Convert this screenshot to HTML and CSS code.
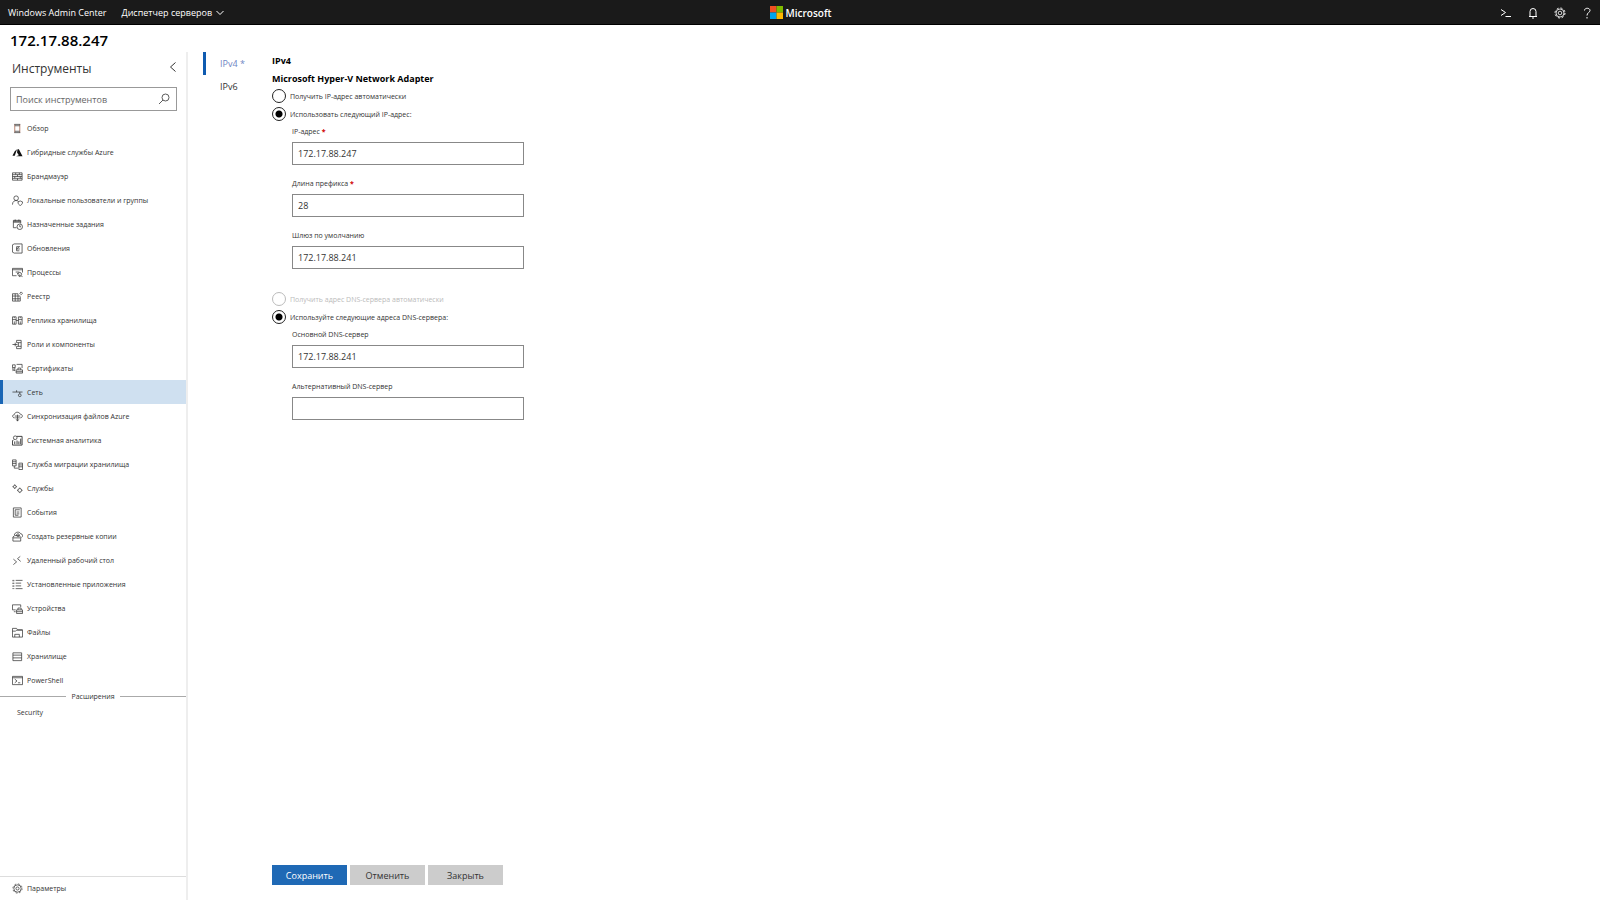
FILE: index.html
```html
<!DOCTYPE html>
<html lang="ru">
<head>
    <meta charset="UTF-8">
    <meta name="viewport" content="width=device-width, initial-scale=1.0">
    <title>Windows Admin Center</title>
    <link rel="stylesheet" href="styles.css">
</head>
<body>
    <header class="topbar">
        <nav class="topbar-left">
            <a href="#">Windows Admin Center</a>
            <button type="button" class="solution">Диспетчер серверов
                <svg width="8" height="6" viewBox="0 0 8 6"><path d="M.5 1 4 4.5 7.5 1"/></svg>
            </button>
        </nav>
        <div class="brand">
            <svg width="13" height="13" viewBox="0 0 13 13">
                <rect width="6.500" height="6.500" fill="#f25022"/>
                <rect x="6.500" width="6.500" height="6.500" fill="#7fba00"/>
                <rect y="6.500" width="6.500" height="6.500" fill="#00a4ef"/>
                <rect x="6.500" y="6.500" width="6.500" height="6.500" fill="#ffb900"/>
            </svg>
            <span>Microsoft</span>
        </div>
        <div class="topbar-right">
            <button type="button" aria-label="PowerShell"><svg width="12" height="12" viewBox="0 0 12 12"><path d="M1 2.500 5.500 5.500 1 8.500M5.500 9.500H11"/></svg></button>
            <button type="button" aria-label="Уведомления"><svg width="12" height="12" viewBox="0 0 12 12"><path d="M3 9V4.500a3 3 0 0 1 6 0V9M2 9.500h8M5 11h2"/></svg></button>
            <button type="button" aria-label="Параметры"><svg width="12" height="12" viewBox="0 0 12 12"><circle cx="6" cy="6" r="5" stroke-dasharray="2 1.900"/><circle cx="6" cy="6" r="4" stroke-width=".8"/><circle cx="6" cy="6" r="1.800" stroke-width=".8"/></svg></button>
            <button type="button" aria-label="Справка"><svg width="12" height="12" viewBox="0 0 12 12"><path d="M3.500 3.500C3.500.500 9 .500 9 3.500 9 5.500 6 5.500 6 8.500M6 10v1.500"/></svg></button>
        </div>
    </header>

    <h1 class="server-name">172.17.88.247</h1>

    <div class="workspace">
        <aside class="sidebar">
            <div class="sidebar-head">
                <h2>Инструменты</h2>
                <button type="button" aria-label="Свернуть"><svg width="8" height="12" viewBox="0 0 8 12"><path d="M6.500 1.500 1.500 6l5 4.500"/></svg></button>
            </div>
            <div class="search">
                <input type="text" placeholder="Поиск инструментов" aria-label="Поиск инструментов">
                <button type="button" aria-label="Найти"><svg width="12" height="12" viewBox="0 0 12 12"><circle cx="7.500" cy="4.500" r="3.500"/><path d="M5 7 1 11"/></svg></button>
            </div>

            <nav class="tools">
                <a href="#"><svg viewBox="0 0 12 12"><path d="M3 1.500v9M8.500 1.500v9" stroke="#a05a40"/><path d="M2.500 1.500H9M2.500 10.500H9M3 3h5.500M3 9h5.500"/></svg>Обзор</a>
                <a href="#"><svg viewBox="0 0 12 12"><path class="solid" d="M5.500 2.500 3 4.500.500 9.500H3zM6 2.500h1.500L11.500 10H4.500l3-1L5.500 6z"/></svg>Гибридные службы Azure</a>
                <a href="#"><svg viewBox="0 0 12 12"><path d="M.500 2h10.500v8H.500zM.500 4h10.500M.500 6h10.500M.500 8h10.500M4 2v2M8 2v2M6 4v2M3 6v2M9 6v2M6 8v2"/></svg>Брандмауэр</a>
                <a href="#"><svg viewBox="0 0 12 12"><circle cx="4.500" cy="3.500" r="2.500"/><path d="M.500 10.500C.500 7 3 6 4.500 6c1 0 2 .500 2.500 1M6.500 7.500 9 6.500l2.500 1C11.500 10 10 11 9 11.500 8 11 6.500 10 6.500 7.500z"/></svg>Локальные пользователи и группы</a>
                <a href="#"><svg viewBox="0 0 12 12"><path d="M5 9.500H1.500v-8h8V5M1.500 2.500h8M1.500 3.500h8M3.500.500v2M7.500.500v2"/><circle cx="8.500" cy="8.500" r="3"/><path d="M8.500 6.500v2H10"/></svg>Назначенные задания</a>
                <a href="#"><svg viewBox="0 0 12 12"><path d="M2.500 1h8.500v10H2.500M2.500 1 .500 2v8l2 1M8.500 4H5M8 4 5 6.500h3.500M5 8.500h3M5 4v4.500"/></svg>Обновления</a>
                <a href="#"><svg viewBox="0 0 12 12"><path d="M5 9.500H.500v-8h11V6M.500 3h11M4 5.500h4M5.500 7.500 7 6.500"/><circle cx="8.500" cy="8" r="2"/><path d="m10 9.500 1.500 1.500M8.500 8v3"/></svg>Процессы</a>
                <a href="#"><svg viewBox="0 0 12 12"><path d="M.500 3h6M.500 3v8h8.500V6M.500 5.500H9M.500 8.500H9M3.500 3v8M6.500 3v8M8.500 2.500 10 1l1.500 1.500L10 4z"/></svg>Реестр</a>
                <a href="#"><svg viewBox="0 0 12 12"><path d="M.500 2h4v8h-4zM7 2h4v8H7zM.500 5h4M7 5h4M2.500 7v3M9 7v3M2.500 2v1.500M9 2v1.500M4.500 6H7"/></svg>Реплика хранилища</a>
                <a href="#"><svg viewBox="0 0 12 12"><path d="M5 4V1.500h5v9H5V8M.500 6H6M3.500 4v4M5 4h5M5 8h5M7 4v4"/></svg>Роли и компоненты</a>
                <a href="#"><svg viewBox="0 0 12 12"><path d="M5 1.500h6v4M.500 2h3v3h-3zM1 5v3.500l1-1 1 1V5M4.500 7.500h7V11h-7zM6.500 7.500v-2h3v2M4.500 9.500h7"/></svg>Сертификаты</a>
                <a href="#" class="active"><svg viewBox="0 0 12 12"><path d="M.500 5.500h11M5 3.500v2M8.500 5.500v2"/><circle cx="8.500" cy="9" r="1.500"/></svg>Сеть</a>
                <a href="#"><svg viewBox="0 0 12 12"><path d="M3 7.500C0 7.500 0 4 2.500 4 3 .500 8 .500 9 3.500c3 0 3 4 0 4M3 5.500h6M3.500 7.500h5M6 4v7M4.500 9 6 11 7.500 9"/></svg>Синхронизация файлов Azure</a>
                <a href="#"><svg viewBox="0 0 12 12"><path d="M5 1.500h6v9.500H.500V6M3 10V7M5.500 10V6M7.500 10V7M9.500 10V4" stroke-width="1"/><circle cx="3.500" cy="3" r="2"/><path d="M2 5 .500 6.500"/></svg>Системная аналитика</a>
                <a href="#"><svg viewBox="0 0 12 12"><path d="M.500 1h4v6.500h-4zM.500 3h4M.500 5h4M7.500 4.500h4v7h-4zM7.500 6.500h4M7.500 8.500h4M2.500 7.500V10h4"/></svg>Служба миграции хранилища</a>
                <a href="#"><svg viewBox="0 0 12 12"><circle cx="3" cy="4" r="1.500"/><circle cx="8.500" cy="8" r="2"/><path d="M3 1.500v1M3 5.500v1M.500 4h1M4.500 4h1M8.500 5v1M8.500 10v1M5.500 8h1M10.500 8h1"/></svg>Службы</a>
                <a href="#"><svg viewBox="0 0 12 12"><path d="M1.500 1h8.500v10H1.500zM3.500 3h5M5 5.500h3M5 7.500h3M3.500 3v6H7"/></svg>События</a>
                <a href="#"><svg viewBox="0 0 12 12"><path d="M2.500 4.500C3 1 8 0 9.500 3 12 3 12 6 10.500 7M1 6.500 3 5h5l1.500 2v4H1zM1 7.500h8"/><circle cx="6.500" cy="4.500" r="1.500"/></svg>Создать резервные копии</a>
                <a href="#"><svg viewBox="0 0 12 12"><path d="m1.500 4.500 3.500 3-3.500 3M9 1.500 6 4l3.500 3"/></svg>Удаленный рабочий стол</a>
                <a href="#"><svg viewBox="0 0 12 12"><path d="M1 1v10M2 1v10" stroke-dasharray="1.500 1.500"/><path d="M4 1.500h7.500M4 4.500h6M4 7.500h6M4 10.500h7.500"/></svg>Установленные приложения</a>
                <a href="#"><svg viewBox="0 0 12 12"><path d="M4 7.500H.500V2h9v2.500M2 9.500h2M5 7.500h6.500v4H5zM6.500 7.500v-2h3.500v2M5 9.500h6.500"/></svg>Устройства</a>
                <a href="#"><svg viewBox="0 0 12 12"><path d="M.500 1.500H5L6 3h5.500v8H.500zM.500 4.500H4L5 3.500h6M3 11V8h5v3"/></svg>Файлы</a>
                <a href="#"><svg viewBox="0 0 12 12"><path d="M1 2h9.500v8.500H1zM1 4.500h9.500M1 7.500h9.500"/></svg>Хранилище</a>
                <a href="#"><svg viewBox="0 0 12 12"><path d="M.500 1.500h11v9H.500zM.500 3h11M3 4.500 5.500 6.500 3 8.500M6.500 8.500H9"/></svg>PowerShell</a>
            </nav>

            <div class="divider">Расширения</div>
            <a href="#" class="extension">Security</a>

            <a href="#" class="settings"><svg viewBox="0 0 12 12"><circle cx="6" cy="6" r="5" stroke-dasharray="2 1.900"/><circle cx="6" cy="6" r="4"/><circle cx="6" cy="6" r="1.700"/></svg>Параметры</a>
        </aside>

        <nav class="tabs">
            <a href="#" class="current">IPv4 *</a>
            <a href="#">IPv6</a>
        </nav>

        <form class="content">
            <h3>IPv4</h3>
            <h3>Microsoft Hyper-V Network Adapter</h3>

            <label class="radio"><input type="radio" name="ip">Получить IP-адрес автоматически</label>
            <label class="radio"><input type="radio" name="ip" checked>Использовать следующий IP-адрес:</label>
            <div class="fields">
                <label for="address">IP-адрес <b>*</b></label>
                <input type="text" id="address" value="172.17.88.247">
                <label for="prefix">Длина префикса <b>*</b></label>
                <input type="text" id="prefix" value="28">
                <label for="gateway">Шлюз по умолчанию</label>
                <input type="text" id="gateway" value="172.17.88.241">
            </div>

            <label class="radio disabled"><input type="radio" name="dns" disabled>Получить адрес DNS-сервера автоматически</label>
            <label class="radio"><input type="radio" name="dns" checked>Используйте следующие адреса DNS-сервера:</label>
            <div class="fields">
                <label for="dns1">Основной DNS-сервер</label>
                <input type="text" id="dns1" value="172.17.88.241">
                <label for="dns2">Альтернативный DNS-сервер</label>
                <input type="text" id="dns2">
            </div>

            <div class="actions">
                <button type="button" class="primary">Сохранить</button>
                <button type="button">Отменить</button>
                <button type="button">Закрыть</button>
            </div>
        </form>
    </div>
</body>
</html>
```
FILE: styles.css
```css
* {
    box-sizing: border-box;
}

body {
    display: flex;
    flex-direction: column;
    min-height: 100vh;
    margin: 0;
    font-family: "Open Sans", "Noto Sans", sans-serif;
    font-size: 7px;
    color: #333;
    background-color: #fff;
}

a {
    color: inherit;
    text-decoration: none;
}

button,
input {
    margin: 0;
    font-family: inherit;
    color: inherit;
}

button {
    padding: 0;
    border: none;
    background: none;
    cursor: pointer;
}

svg {
    flex: none;
    fill: none;
    stroke: currentColor;
}

h1,
h2,
h3 {
    margin: 0;
}

/* header */
.topbar {
    display: grid;
    grid-template-columns: 1fr auto 1fr;
    align-items: center;
    height: 25px;
    padding: 1px 7px 0 8px;
    color: #fff;
    background-color: #1a1a1a;
    border-bottom: 1px solid #000;
    font-size: 9px;
}

.topbar-left {
    display: flex;
    align-items: center;
    gap: 15px;
}

.solution {
    display: flex;
    align-items: center;
    gap: 4px;
    font-size: 9px;
}

.brand {
    display: flex;
    align-items: center;
    gap: 3px;
    font-size: 10px;
    font-weight: 600;
}

.brand svg {
    stroke: none;
}

.topbar-right {
    display: flex;
    justify-content: flex-end;
    gap: 15px;
}

.topbar-right button {
    display: flex;
}

.server-name {
    padding: 5px 10px 0;
    height: 27px;
    font-size: 15px;
    font-weight: 600;
    line-height: 20px;
    color: #000;
}

.workspace {
    display: flex;
    flex: 1;
}

/* tools list */
.sidebar {
    display: flex;
    flex-direction: column;
    width: 188px;
    border-right: 2px solid #eee;
}

.sidebar-head {
    display: flex;
    justify-content: space-between;
    align-items: center;
    height: 32px;
    padding: 0 9px 0 12px;
}

.sidebar-head h2 {
    font-size: 12px;
    font-weight: 400;
}

.search {
    display: flex;
    height: 24px;
    margin: 3px 9px 5px 10px;
    border: 1px solid #999;
}

.search input {
    flex: 1;
    min-width: 0;
    padding: 0 5px;
    border: none;
    font-size: 9px;
}

.search input::placeholder {
    color: #666;
}

.search button {
    display: flex;
    align-items: center;
    justify-content: center;
    width: 25px;
}

.search svg {
    stroke-width: 0.8px;
}

.tools a,
.settings {
    display: flex;
    align-items: center;
    gap: 4px;
    height: 24px;
    padding-left: 12px;
}

.tools svg,
.settings svg {
    width: 11px;
    height: 11px;
    stroke-width: 0.8px;
}

.tools .solid {
    fill: #111;
    stroke: none;
}

.tools .active {
    padding-left: 9px;
    border-left: 3px solid #1a66b5;
    background-color: #cfe0f0;
}

.divider {
    display: flex;
    align-items: center;
    gap: 5px;
    height: 8px;
}

.divider::before,
.divider::after {
    content: "";
    flex: 1;
    height: 1px;
    background-color: #aaa;
}

.extension {
    padding: 8px 17px;
    line-height: 10px;
}

.settings {
    margin-top: auto;
    border-top: 1px solid #ddd;
}

/* protocol tabs */
.tabs {
    display: flex;
    flex-direction: column;
    width: 69px;
    margin-left: 15px;
    font-size: 9px;
}

.tabs a {
    padding-left: 14px;
    border-left: 3px solid transparent;
    line-height: 23px;
}

.tabs .current {
    color: #6f86c4;
    border-color: #0f5bb0;
}

/* adapter settings */
.content {
    display: flex;
    flex-direction: column;
    flex: 1;
}

.content h3 {
    font-size: 9px;
    line-height: 18px;
    color: #000;
}

.radio {
    display: flex;
    align-items: center;
    gap: 4px;
    height: 18px;
    padding-bottom: 2px;
}

.radio input {
    appearance: none;
    width: 14px;
    height: 14px;
    border: 1px solid #222;
    border-radius: 50%;
}

.radio input:checked {
    background: radial-gradient(circle, #000 3px, #fff 4px);
}

.disabled {
    color: #bbb;
}

.disabled input {
    border-color: #bbb;
}

.fields {
    display: flex;
    flex-direction: column;
    align-items: flex-start;
    padding: 3px 0 0 20px;
}

.fields label {
    height: 15px;
    line-height: 10px;
}

.fields b {
    color: #d00000;
}

.fields input {
    width: 232px;
    height: 23px;
    margin-bottom: 14px;
    padding: 0 5px;
    border: 1px solid #888;
    font-size: 9px;
}

.fields + .radio {
    margin-top: 8px;
}

.actions {
    display: flex;
    gap: 3px;
    margin-top: auto;
    padding-bottom: 15px;
}

.actions button {
    width: 75px;
    height: 20px;
    background-color: #ccc;
    font-size: 9px;
}

.actions .primary {
    color: #fff;
    background-color: #1f69b5;
}
```
